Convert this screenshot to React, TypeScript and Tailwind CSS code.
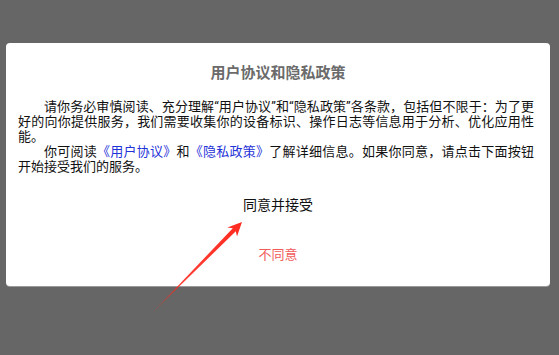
export default function App() {
  return (
    <div
      className="relative w-[559px] h-[355px] bg-[#666666] overflow-hidden"
      style={{ fontFamily: 'Roboto, "Noto Sans CJK SC", sans-serif' }}
    >
      <div className="pt-[43px] pl-[6px] pr-[9px]">
        {/* Dialog */}
        <div className="h-[243px] bg-white rounded-[4px] shadow-[0_1px_0_#9a9a9a] flex flex-col">
          <h2 className="pt-[20px] text-center text-[15px] leading-[20px] font-bold text-[#6b6b6b]">
            用户协议和隐私政策
          </h2>

          <div className="mt-[16px] pl-[12px] pr-[16px] text-[13px] leading-[15px] text-[#111] text-justify">
            <p className="indent-[26px]">
              请你务必审慎阅读、充分理解“用户协议”和“隐私政策”各条款，包括但不限于：为了更好的向你提供服务，我们需要收集你的设备标识、操作日志等信息用于分析、优化应用性能。
            </p>
            <p className="indent-[26px]">
              你可阅读<span className="text-[#1f33d9]">《用户协议》</span>和<span className="text-[#1f33d9]">《隐私政策》</span>了解详细信息。如果你同意，请点击下面按钮开始接受我们的服务。
            </p>
          </div>

          <div className="mt-[11px] flex flex-col items-center">
            <button className="h-[40px] px-6 text-[14px] text-[#111]">同意并接受</button>
            <button className="mt-[10px] h-[40px] px-6 text-[13px] text-[#f25c5c]">不同意</button>
          </div>
        </div>
      </div>

      {/* Annotation arrow */}
      <svg className="absolute left-0 top-0 pointer-events-none" width="559" height="355" viewBox="0 0 559 355">
        <defs>
          <linearGradient id="arrowFade" x1="152" y1="313" x2="242" y2="222" gradientUnits="userSpaceOnUse">
            <stop offset="0" stopColor="#ff2a1f" stopOpacity="0.35" />
            <stop offset="0.35" stopColor="#ff2a1f" stopOpacity="0.9" />
            <stop offset="1" stopColor="#ff2a1f" />
          </linearGradient>
        </defs>
        <polygon
          points="152,313 232.8,228.2 227.4,227.4 242,222 237,236.6 235.8,231.3"
          fill="url(#arrowFade)"
        />
      </svg>
    </div>
  );
}
